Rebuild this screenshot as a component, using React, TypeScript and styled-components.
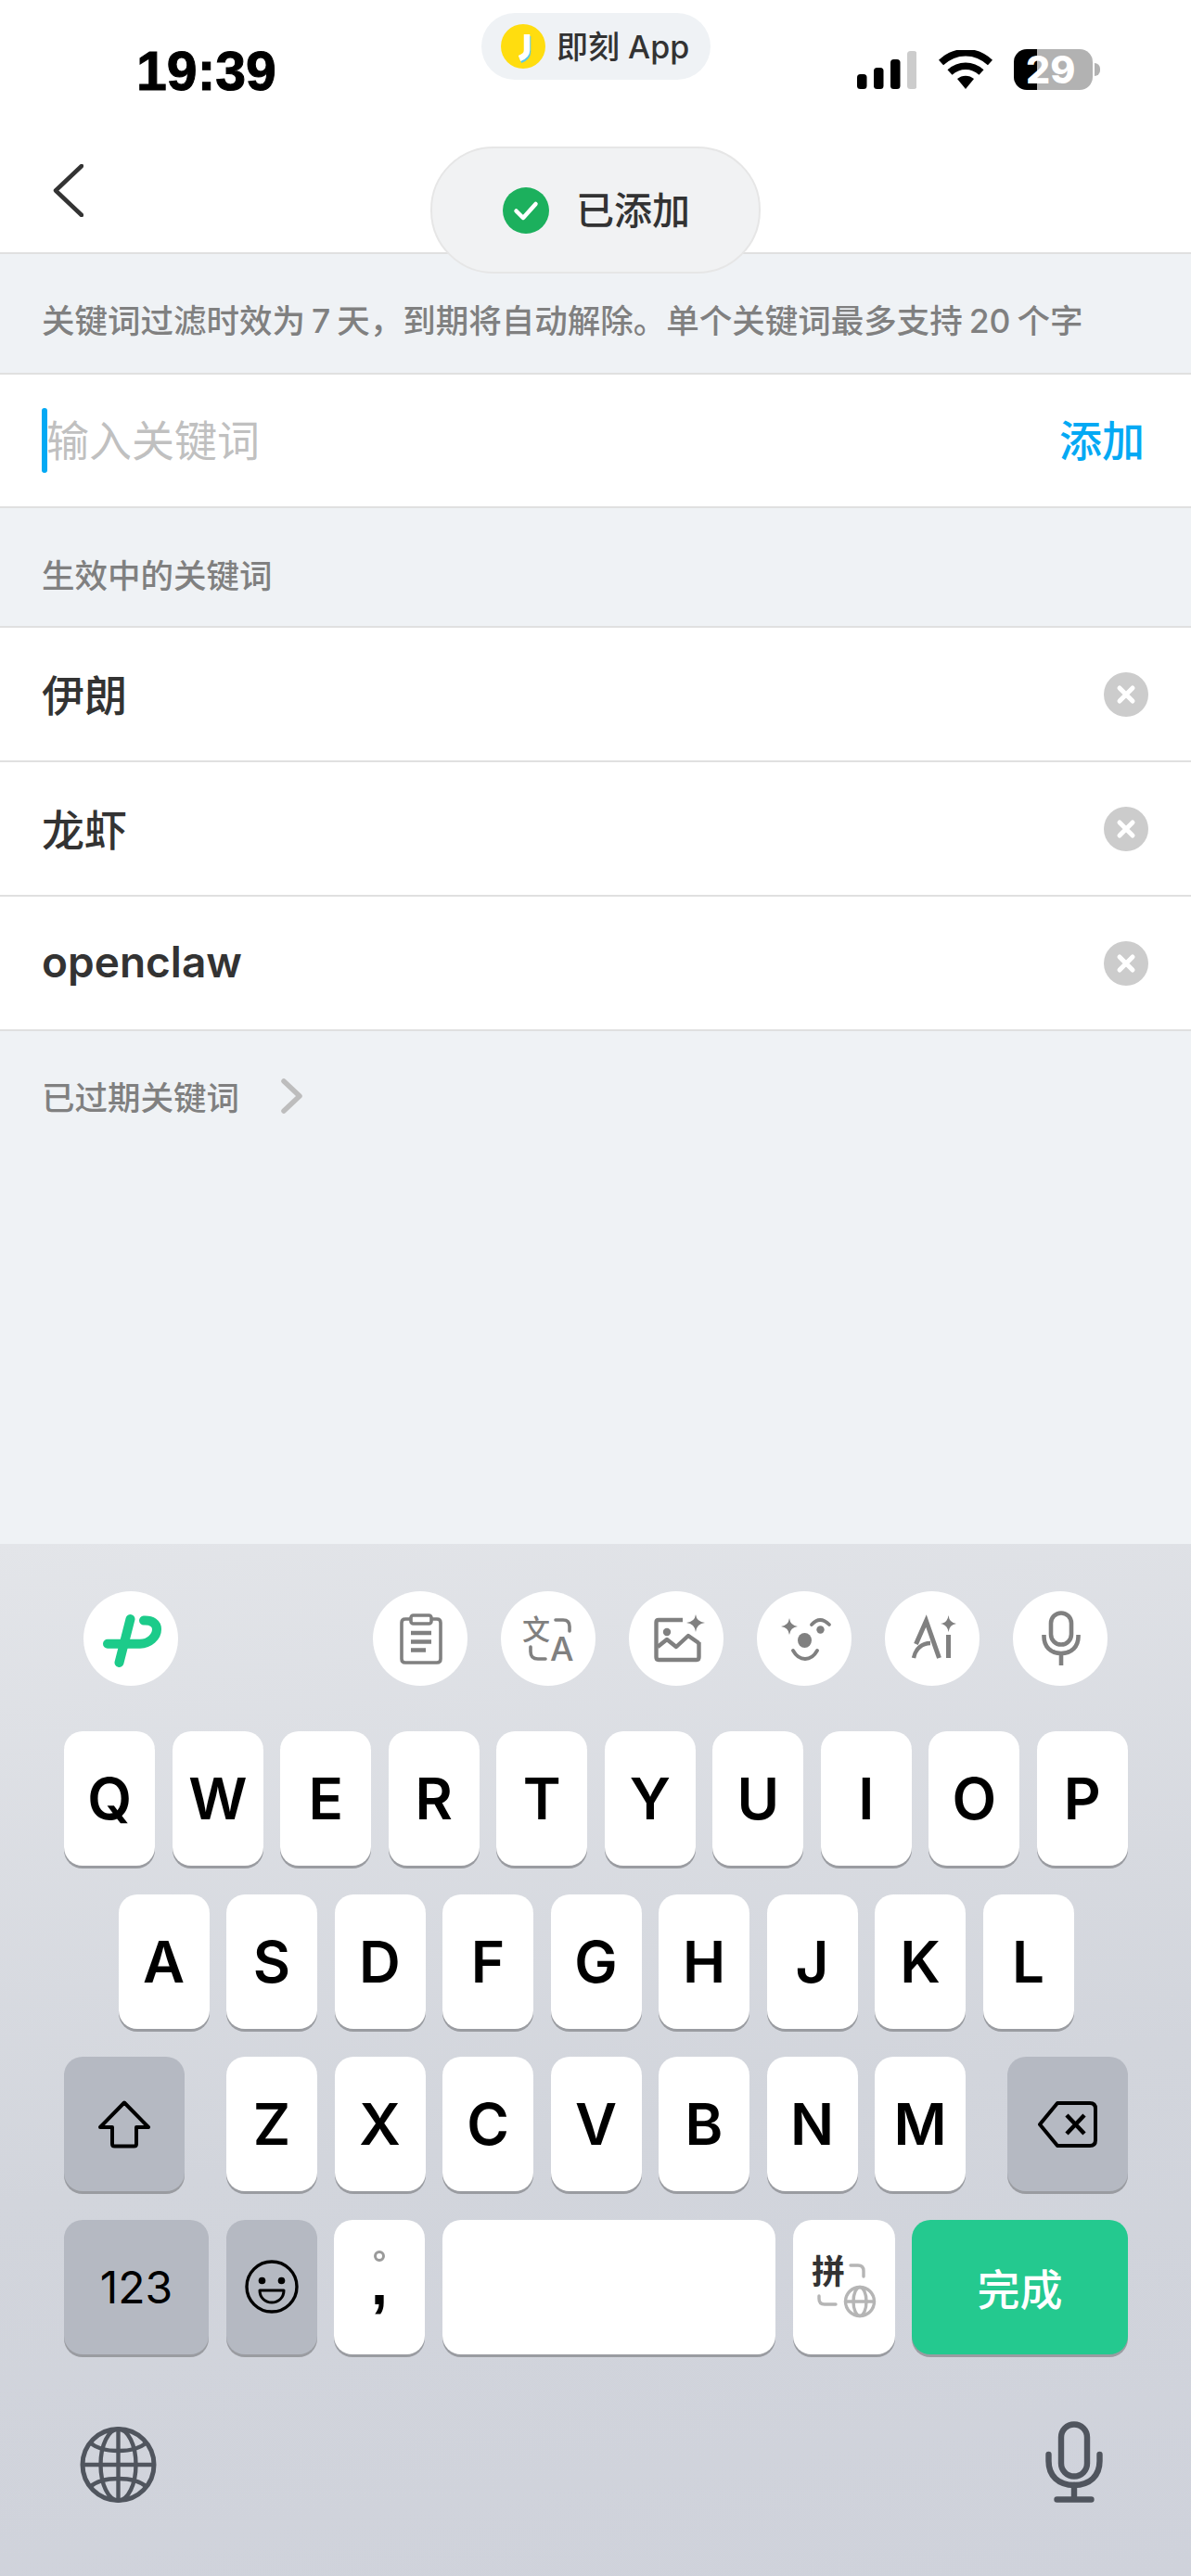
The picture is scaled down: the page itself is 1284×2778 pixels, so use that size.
import React from "react";
import styled, { createGlobalStyle } from "styled-components";

const FONT = `Inter, "Noto Sans CJK SC", sans-serif`;

const GlobalStyle = createGlobalStyle`
  html, body {
    margin: 0;
    padding: 0;
    background: #eff2f5;
  }
  * {
    box-sizing: border-box;
  }
`;

const Page = styled.div`
  position: relative;
  width: 1284px;
  height: 2778px;
  display: flex;
  flex-direction: column;
  background: #eff2f5;
  font-family: ${FONT};
  overflow: hidden;
`;

const Header = styled.header`
  height: 274px;
  background: #fff;
  border-bottom: 2px solid #e0e0e0;
  flex-shrink: 0;
`;

const StatusBar = styled.div`
  height: 130px;
  padding: 53px 98px 0 147px;
  display: flex;
  justify-content: space-between;
  align-items: flex-start;
`;

const Time = styled.div`
  font-family: "Liberation Sans", sans-serif;
  font-size: 59px;
  font-weight: 700;
  line-height: 48px;
  color: #000;
  -webkit-text-stroke: 1px #000;
`;

const StatusIcons = styled.div`
  display: flex;
  align-items: center;
  gap: 23px;
  height: 44px;
`;

const Battery = styled.div`
  display: flex;
  align-items: center;
  gap: 2px;
`;

const BatteryBody = styled.div`
  width: 85px;
  height: 44px;
  border-radius: 14px;
  background: linear-gradient(90deg, #000 0 29%, #b2b2b2 29% 100%);
  color: #fff;
  font-family: Inter, sans-serif;
  font-size: 41px;
  font-weight: 800;
  line-height: 44px;
  padding-left: 13px;
`;

const BatteryCap = styled.div`
  width: 6px;
  height: 14px;
  border-radius: 0 7px 7px 0;
  background: #b2b2b2;
`;

const AppPill = styled.div`
  position: absolute;
  left: 519px;
  top: 14px;
  width: 247px;
  height: 72px;
  border-radius: 36px;
  background: #eff2f5;
  display: flex;
  align-items: center;
  padding-left: 21px;
  gap: 12px;
  color: #333;
  font-size: 34px;
  font-weight: 500;
`;

const AppPillLabel = styled.span`
  margin-bottom: 3px;
`;

const Toast = styled.div`
  position: absolute;
  left: 464px;
  top: 158px;
  width: 356px;
  height: 137px;
  border-radius: 68px;
  background: #f1f2f3;
  border: 2px solid #e6e6e6;
  display: flex;
  align-items: center;
  padding-left: 76px;
  gap: 29px;
  color: #333;
  font-size: 41px;
  font-weight: 500;
`;

const ToastLabel = styled.span`
  margin-bottom: 6px;
`;

const NavBar = styled.nav`
  height: 142px;
  padding: 47px 0 0 57px;
`;

const InfoBar = styled.div`
  height: 128px;
  padding: 10px 0 0 45px;
  display: flex;
  align-items: center;
  color: #808080;
  font-size: 35.5px;
  font-weight: 500;
  word-spacing: -2.5px;
  flex-shrink: 0;
`;

const InputRow = styled.div`
  height: 146px;
  background: #fff;
  border-top: 2px solid #e0e0e0;
  border-bottom: 2px solid #e0e0e0;
  padding: 0 50px 0 45px;
  display: flex;
  align-items: center;
  justify-content: space-between;
  flex-shrink: 0;
`;

const InputField = styled.div`
  display: flex;
  align-items: center;
`;

const Caret = styled.span`
  width: 6px;
  height: 70px;
  border-radius: 3px;
  background: #03a9f4;
`;

const Placeholder = styled.span`
  margin-bottom: 7px;
  margin-left: -1px;
  color: #c0c0c0;
  font-size: 46px;
`;

const AddLabel = styled.span`
  margin-bottom: 6px;
  color: #03a9f4;
  font-size: 46px;
  font-weight: 500;
`;

const SectionTitle = styled.div`
  height: 127px;
  padding: 14px 0 0 45px;
  display: flex;
  align-items: center;
  color: #808080;
  font-size: 35.5px;
  font-weight: 500;
  flex-shrink: 0;
`;

const KeywordList = styled.div`
  background: #fff;
  border-top: 2px solid #e0e0e0;
  flex-shrink: 0;
`;

const KeywordRow = styled.div`
  height: 145px;
  padding: 0 46px 0 45px;
  border-bottom: 2px solid #e0e0e0;
  display: flex;
  align-items: center;
  justify-content: space-between;
  color: #333;
  font-size: 46px;
`;

const KeywordText = styled.span<{ $latin?: boolean }>`
  margin-bottom: 4px;
  font-weight: ${(p) => (p.$latin ? 600 : 500)};
`;

const ExpiredLink = styled.div`
  height: 145px;
  padding: 0 0 6px 45px;
  display: flex;
  align-items: center;
  gap: 44px;
  color: #808080;
  font-size: 35.5px;
  font-weight: 500;
  flex-shrink: 0;
`;

const Keyboard = styled.div`
  margin-top: auto;
  height: 1113px;
  flex-shrink: 0;
  padding: 51px 68px 0 69px;
  background: linear-gradient(172deg, #e3e5e9 0%, #d2d5dc 55%, #cfd2db 100%);
`;

const Toolbar = styled.div`
  display: flex;
  justify-content: space-between;
  padding: 0 22px 0 21px;
  margin-bottom: 49px;
`;

const ToolGroup = styled.div`
  display: flex;
  gap: 36px;
`;

const ToolButton = styled.div`
  width: 102px;
  height: 102px;
  border-radius: 50%;
  background: #fff;
  color: #808080;
`;

const KeyRows = styled.div`
  display: flex;
  flex-direction: column;
  gap: 30.5px;
`;

const KeyRow = styled.div<{ $between?: boolean }>`
  display: flex;
  justify-content: ${(p) => (p.$between ? "space-between" : "center")};
  gap: 18.5px;
`;

const KeyGroup = styled.div`
  display: flex;
  gap: 18.5px;
`;

const Key = styled.div<{ $w?: number; $tone?: "light" | "dark" | "green"; $grow?: boolean }>`
  width: ${(p) => (p.$w ? `${p.$w}px` : "98px")};
  ${(p) => (p.$grow ? "flex: 1;" : "flex-shrink: 0;")}
  height: 145px;
  border-radius: 20px;
  display: flex;
  align-items: center;
  justify-content: center;
  background: ${(p) => (p.$tone === "dark" ? "#b5b9c2" : p.$tone === "green" ? "#24c98f" : "#fff")};
  box-shadow: 0 3px 0 #9a9ca1;
  color: ${(p) => (p.$tone === "green" ? "#fff" : "#000")};
  font-size: 62px;
  font-weight: 600;
`;

const NumLabel = styled.span`
  font-size: 48px;
  font-weight: 400;
`;

const DoneLabel = styled.span`
  font-size: 46px;
  font-weight: 500;
`;

const PunctKey = styled(Key)`
  flex-direction: column;
  justify-content: flex-start;
  padding-top: 33px;
`;

const PunctRing = styled.span`
  width: 12px;
  height: 12px;
  border-radius: 50%;
  border: 3px solid #9a9a9a;
`;

const PunctComma = styled.span`
  font-family: "Liberation Sans", sans-serif;
  font-size: 66px;
  font-weight: 700;
  line-height: 50px;
  margin-top: -2px;
`;

const BottomBar = styled.div`
  display: flex;
  justify-content: space-between;
  align-items: flex-end;
  margin-top: 72px;
  padding: 0 27px 0 17px;
  color: #50555e;
`;

const Back = () => (
  <svg width="33" height="57" viewBox="0 0 33 57" fill="none">
    <path d="M31 2 L3 28.5 L31 55" stroke="#333" strokeWidth="4.5" strokeLinecap="round" strokeLinejoin="round" />
  </svg>
);

const Signal = () => (
  <svg width="64" height="41" viewBox="0 0 64 41" style={{ marginRight: 1 }}>
    <rect x="0" y="25" width="10.5" height="16" rx="3.5" fill="#000" />
    <rect x="18" y="18" width="10.5" height="23" rx="3.5" fill="#000" />
    <rect x="36" y="9" width="10.5" height="32" rx="3.5" fill="#000" />
    <rect x="54" y="0" width="10.5" height="41" rx="3.5" fill="#ccc" />
  </svg>
);

const Wifi = () => (
  <svg width="58" height="42" viewBox="0 0 58 42" fill="none">
    <path d="M2.5 13.5 C18 -1 40 -1 55.5 13.5" stroke="#000" strokeWidth="7.5" />
    <path d="M12 24 C22 15 36 15 46 24" stroke="#000" strokeWidth="7.5" />
    <path d="M20 31 C25 26.5 33 26.5 38 31 L29 42 Z" fill="#000" />
  </svg>
);

const JikeLogo = () => (
  <svg width="48" height="48" viewBox="0 0 48 48">
    <circle cx="24" cy="24" r="24" fill="#ffdd0f" />
    <path d="M28 11 L28 28 C28 33 25 35 20 37" stroke="#5ac8e8" strokeWidth="6.5" fill="none" transform="translate(1 2)" />
    <path d="M28 11 L28 28 C28 33 25 35 20 37" stroke="#fff" strokeWidth="6.5" fill="none" />
  </svg>
);

const CheckBadge = () => (
  <svg width="50" height="50" viewBox="0 0 50 50" fill="none">
    <circle cx="25" cy="25" r="25" fill="#1cb05d" />
    <path d="M14.5 25.5 L22 33 L35.5 18" stroke="#fff" strokeWidth="4.5" strokeLinecap="round" strokeLinejoin="round" />
  </svg>
);

const CloseBadge = () => (
  <svg width="48" height="48" viewBox="0 0 48 48" fill="none">
    <circle cx="24" cy="24" r="24" fill="#ccc" />
    <path d="M17 17 L31 31 M31 17 L17 31" stroke="#fff" strokeWidth="5" strokeLinecap="round" />
  </svg>
);

const ChevronRight = () => (
  <svg width="24" height="38" viewBox="0 0 24 38" fill="none">
    <path d="M4 3 L21 19 L4 35" stroke="#bdbdbd" strokeWidth="5.5" strokeLinecap="round" strokeLinejoin="round" />
  </svg>
);

const PLogo = () => (
  <svg width="102" height="102" viewBox="0 0 102 102" fill="none">
    <path d="M26 56.7 H61 C71 56.7 79 49 79 41 C79 35 74 31 65 31.5" stroke="#1ccb8a" strokeWidth="10" strokeLinecap="round" strokeLinejoin="round" />
    <path d="M50.5 30 L38.5 77" stroke="#1ccb8a" strokeWidth="10" strokeLinecap="round" />
  </svg>
);

const ClipboardIcon = () => (
  <svg width="102" height="102" viewBox="0 0 102 102" fill="none" stroke="currentColor" strokeWidth="3.6">
    <path d="M40 30 H35 Q31 30 31 34 V73 Q31 77 35 77 H69 Q73 77 73 73 V34 Q73 30 69 30 H64" />
    <rect x="41" y="26" width="22" height="9" rx="2.5" />
    <path d="M41 45 H63 M41 54.5 H63 M41 63.5 H57" strokeWidth="4.4" />
  </svg>
);

const TranslateIcon = () => (
  <svg width="102" height="102" viewBox="0 0 102 102" fill="none" stroke="currentColor" strokeWidth="3.6" strokeLinecap="round">
    <text x="23" y="52" fontSize="30" fontWeight="500" fill="currentColor" stroke="none" fontFamily={FONT}>文</text>
    <text x="53" y="75" fontSize="36" fontWeight="500" fill="currentColor" stroke="none" fontFamily={FONT}>A</text>
    <path d="M59 31 H67 Q74 31 74 38 V43" />
    <path d="M32 60 V65 Q32 73 40 73 H48" />
  </svg>
);

const PhotoIcon = () => (
  <svg width="102" height="102" viewBox="0 0 102 102" fill="none" stroke="currentColor" strokeWidth="4.4" strokeLinejoin="round">
    <path d="M58 31 H32 Q29.5 31 29.5 33.5 V71 Q29.5 74 32 74 H73 Q75.5 74 75.5 71 V55" />
    <path d="M31 60 L41 52 L51 60 L64 48 L75.5 56" />
    <circle cx="41" cy="44" r="4.2" fill="currentColor" stroke="none" />
    <path d="M72 25 Q73 33 82 34 Q73 35 72 44 Q71 35 62 34 Q71 33 72 25 Z" fill="currentColor" stroke="none" />
  </svg>
);

const FaceIcon = () => (
  <svg width="102" height="102" viewBox="0 0 102 102" fill="none" stroke="currentColor" strokeWidth="3.8" strokeLinecap="round">
    <path d="M35 29 Q36 37 44 38 Q36 39 35 47 Q34 39 26 38 Q34 37 35 29 Z" fill="currentColor" stroke="none" />
    <path d="M59 36 Q68 26 78 36" />
    <circle cx="68.5" cy="41.5" r="4.2" fill="currentColor" stroke="none" />
    <ellipse cx="51.5" cy="53" rx="7.5" ry="8" fill="currentColor" stroke="none" />
    <path d="M39 64 Q44 73 52 73 Q60 73 65 64" />
  </svg>
);

const AiIcon = () => (
  <svg width="102" height="102" viewBox="0 0 102 102" fill="none" stroke="currentColor" strokeWidth="4.4">
    <path d="M33.5 57 L44.5 32 L58.5 72" strokeWidth="5" />
    <path d="M31 72 C33 62 40 56 49 56" />
    <rect x="66" y="47" width="5" height="25" fill="currentColor" stroke="none" />
    <path d="M68.5 26 Q69.5 34 77 35 Q69.5 36 68.5 44 Q67.5 36 60 35 Q67.5 34 68.5 26 Z" fill="currentColor" stroke="none" />
  </svg>
);

const MicTool = () => (
  <svg width="102" height="102" viewBox="0 0 102 102" fill="none" stroke="currentColor" strokeWidth="4.6">
    <rect x="41" y="23.5" width="22" height="34" rx="11" />
    <path d="M33.5 47 V49 C33.5 60 41 67 52 67 C63 67 70.5 60 70.5 49 V47" />
    <path d="M52 67 V80" />
  </svg>
);

const ShiftIcon = () => (
  <svg width="58" height="52" viewBox="0 0 58 52" fill="none">
    <path d="M29 2.5 L55 29 H42 V47 Q42 49.5 39.5 49.5 H18.5 Q16 49.5 16 47 V29 H3 Z" stroke="#000" strokeWidth="4" strokeLinejoin="round" />
  </svg>
);

const BackspaceIcon = () => (
  <svg width="64" height="50" viewBox="0 0 64 50" fill="none" stroke="#000" strokeWidth="4" strokeLinecap="round" strokeLinejoin="round">
    <path d="M21 2 H56 Q62 2 62 8 V42 Q62 48 56 48 H21 L2 25 Z" />
    <path d="M31 15 L50 35 M50 15 L31 35" strokeWidth="4.5" strokeLinecap="butt" />
  </svg>
);

const EmojiIcon = () => (
  <svg width="58" height="58" viewBox="0 0 58 58" fill="none">
    <circle cx="29" cy="29" r="27" stroke="#000" strokeWidth="3.4" />
    <circle cx="18.5" cy="22.5" r="3.8" fill="#000" />
    <circle cx="39.5" cy="22.5" r="3.8" fill="#000" />
    <path d="M16 33 H42 C42 41 36 46 29 46 C22 46 16 41 16 33 Z" stroke="#000" strokeWidth="3" strokeLinejoin="round" />
  </svg>
);

const PinyinIcon = () => (
  <svg width="110" height="145" viewBox="0 0 110 145" fill="none" stroke="#b5b5b5" strokeWidth="3.4" strokeLinecap="round">
    <text x="20" y="69" fontSize="36" fontWeight="700" fill="#333" stroke="none" fontFamily={FONT}>拼</text>
    <path d="M62 49 H70 Q76 49 76 55 V61" />
    <path d="M28 82 V85 Q28 91 34 91 H46" />
    <circle cx="72" cy="88" r="15.5" />
    <ellipse cx="72" cy="88" rx="7" ry="15.5" />
    <path d="M56.5 88 H87.5" />
  </svg>
);

const GlobeIcon = () => (
  <svg width="83" height="82" viewBox="0 0 83 82" fill="none" stroke="currentColor" strokeWidth="4.4">
    <circle cx="41.5" cy="41" r="38.5" strokeWidth="5" />
    <ellipse cx="41.5" cy="41" rx="19" ry="38.5" />
    <path d="M41.5 2.5 V79.5 M3 41 H80" />
    <path d="M11 17 C24 29 59 29 72 17 M11 65 C24 53 59 53 72 65" />
  </svg>
);

const MicIcon = () => (
  <svg width="62" height="88" viewBox="0 0 62 88" fill="none" stroke="currentColor" strokeWidth="6.4" strokeLinecap="round">
    <rect x="17" y="3.5" width="28" height="56" rx="14" />
    <path d="M3.5 36 V43 C3.5 59 14 69 31 69 C48 69 58.5 59 58.5 43 V36" />
    <path d="M31 69 V84.5 M12.5 84.5 H49.5" />
  </svg>
);

const ROW_ONE = ["Q", "W", "E", "R", "T", "Y", "U", "I", "O", "P"];
const ROW_TWO = ["A", "S", "D", "F", "G", "H", "J", "K", "L"];
const ROW_THREE = ["Z", "X", "C", "V", "B", "N", "M"];
const KEYWORDS = ["伊朗", "龙虾", "openclaw"];

const App: React.FC = () => {
  return (
    <Page>
      <GlobalStyle />
      <Header>
        <StatusBar>
          <Time>19:39</Time>
          <StatusIcons>
            <Signal />
            <Wifi />
            <Battery>
              <BatteryBody>29</BatteryBody>
              <BatteryCap />
            </Battery>
          </StatusIcons>
        </StatusBar>
        <NavBar>
          <Back />
        </NavBar>
      </Header>
      <AppPill>
        <JikeLogo />
        <AppPillLabel>即刻 App</AppPillLabel>
      </AppPill>
      <Toast>
        <CheckBadge />
        <ToastLabel>已添加</ToastLabel>
      </Toast>

      <InfoBar>关键词过滤时效为 7 天，到期将自动解除。单个关键词最多支持 20 个字</InfoBar>
      <InputRow>
        <InputField>
          <Caret />
          <Placeholder>输入关键词</Placeholder>
        </InputField>
        <AddLabel>添加</AddLabel>
      </InputRow>
      <SectionTitle>生效中的关键词</SectionTitle>
      <KeywordList>
        {KEYWORDS.map((word) => (
          <KeywordRow key={word}>
            <KeywordText $latin={/^[a-z]/.test(word)}>{word}</KeywordText>
            <CloseBadge />
          </KeywordRow>
        ))}
      </KeywordList>
      <ExpiredLink>
        <span>已过期关键词</span>
        <ChevronRight />
      </ExpiredLink>

      <Keyboard>
        <Toolbar>
          <ToolButton>
            <PLogo />
          </ToolButton>
          <ToolGroup>
            <ToolButton><ClipboardIcon /></ToolButton>
            <ToolButton><TranslateIcon /></ToolButton>
            <ToolButton><PhotoIcon /></ToolButton>
            <ToolButton><FaceIcon /></ToolButton>
            <ToolButton><AiIcon /></ToolButton>
            <ToolButton><MicTool /></ToolButton>
          </ToolGroup>
        </Toolbar>
        <KeyRows>
          <KeyRow>
            {ROW_ONE.map((k) => <Key key={k}>{k}</Key>)}
          </KeyRow>
          <KeyRow>
            {ROW_TWO.map((k) => <Key key={k}>{k}</Key>)}
          </KeyRow>
          <KeyRow $between>
            <Key $w={130} $tone="dark"><ShiftIcon /></Key>
            <KeyGroup>
              {ROW_THREE.map((k) => <Key key={k}>{k}</Key>)}
            </KeyGroup>
            <Key $w={130} $tone="dark"><BackspaceIcon /></Key>
          </KeyRow>
          <KeyRow>
            <Key $w={156} $tone="dark"><NumLabel>123</NumLabel></Key>
            <Key $tone="dark"><EmojiIcon /></Key>
            <PunctKey>
              <PunctRing />
              <PunctComma>,</PunctComma>
            </PunctKey>
            <Key $grow />
            <Key $w={110}><PinyinIcon /></Key>
            <Key $w={233} $tone="green"><DoneLabel>完成</DoneLabel></Key>
          </KeyRow>
        </KeyRows>
        <BottomBar>
          <GlobeIcon />
          <MicIcon />
        </BottomBar>
      </Keyboard>
    </Page>
  );
};

export default App;
